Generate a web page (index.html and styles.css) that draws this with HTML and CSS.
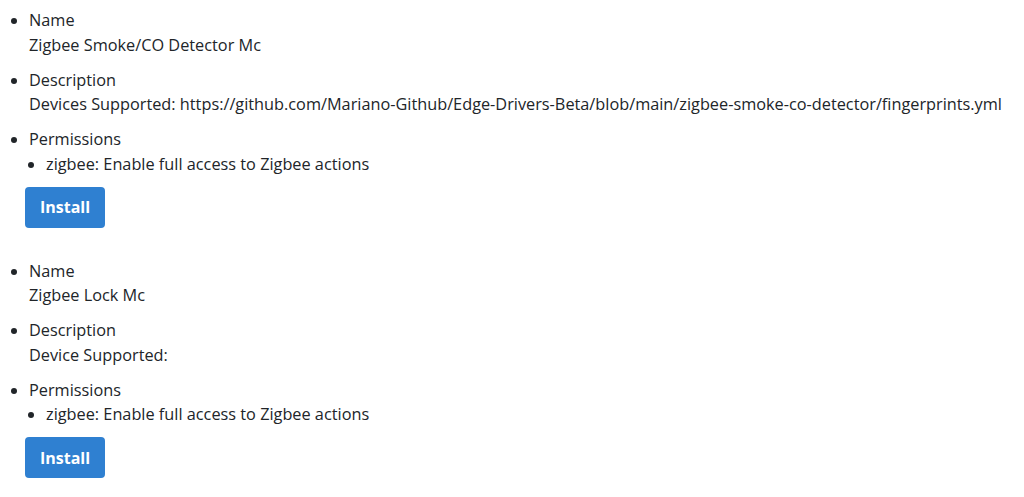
FILE: index.html
```html
<!DOCTYPE html>
<html>
<head>
<meta charset="utf-8">
<link rel="stylesheet" href="styles.css">
</head>
<body>
<div class="driver">
  <ul class="fields">
    <li class="field">Name<br>Zigbee Smoke/CO Detector Mc</li>
    <li class="field">Description<br>Devices Supported: https://github.com/Mariano-Github/Edge-Drivers-Beta/blob/main/zigbee-smoke-co-detector/fingerprints.yml</li>
    <li class="field">Permissions
      <ul class="perms">
        <li>zigbee: Enable full access to Zigbee actions</li>
      </ul>
    </li>
  </ul>
  <button class="btn">Install</button>
</div>
<div class="driver">
  <ul class="fields">
    <li class="field">Name<br>Zigbee Lock Mc</li>
    <li class="field">Description<br>Device Supported:</li>
    <li class="field">Permissions
      <ul class="perms">
        <li>zigbee: Enable full access to Zigbee actions</li>
      </ul>
    </li>
  </ul>
  <button class="btn">Install</button>
</div>
</body>
</html>
```
FILE: styles.css
```css
html, body {
  margin: 0;
  padding: 0;
  background: #fff;
}
body {
  font-family: "Open Sans", sans-serif;
  font-size: 16.3px;
  line-height: 24.5px;
  color: #212529;
  padding: 8px 0 0 0;
}
.driver {
  margin-bottom: 31px;
}
.fields {
  margin: 0;
  padding-left: 29px;
  list-style: disc;
}
.field {
  margin-bottom: 10.5px;
}
.perms {
  margin: 0;
  padding-left: 17px;
  list-style: disc;
}
.btn {
  margin-top: 1px;
  margin-left: 25px;
  display: block;
  width: 80px;
  height: 41px;
  padding: 0;
  border: none;
  border-radius: 4px;
  background: #2f80d1;
  color: #fff;
  font-family: "Open Sans", sans-serif;
  font-weight: 700;
  font-size: 16px;
}
```
